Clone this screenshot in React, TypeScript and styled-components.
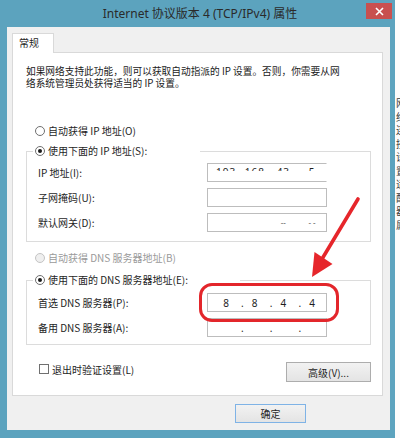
import React from 'react';
import styled, { createGlobalStyle } from 'styled-components';

const GlobalStyle = createGlobalStyle`
	html, body {
		margin: 0;
		padding: 0;
		background: #fbfbfb;
	}
	body {
		font-family: "Noto Sans CJK SC", "Noto Sans", sans-serif;
		font-size: 10px;
		color: #1e1e1e;
	}
	* {
		box-sizing: border-box;
	}
`;

const ipRows = [
	{ label: 'IP 地址(I):', octets: ['193', '168', '43', '5'], look: 'top' },
	{ label: '子网掩码(U):', octets: ['', '', '', ''], look: 'plain' },
	{ label: '默认网关(D):', octets: ['', '', '--', '- -'], look: 'faint' },
];

const dnsRows = [
	{ label: '首选 DNS 服务器(P):', octets: ['8', '8', '4', '4'], look: 'dots' },
	{ label: '备用 DNS 服务器(A):', octets: ['', '', '', ''], look: 'dots' },
];

const introLines = [
	'如果网络支持此功能，则可以获取自动指派的 IP 设置。否则，你需要从网',
	'络系统管理员处获得适当的 IP 设置。',
];

const backdropChars = ['网', '络', '连', '接', '设', '置', '适', '配', '器', '属'];

type Look = 'top' | 'plain' | 'faint' | 'dots';

const IpField = ({ octets, look }: { octets: string[]; look: Look }) => (
	<IpBox $open={look === 'top'}>
		{octets.map((o, i) => (
			<React.Fragment key={i}>
				<Octet $look={look}>{o}</Octet>
				{i < 3 && look === 'dots' && <Dot>.</Dot>}
				{i < 3 && look !== 'dots' && <Dot />}
			</React.Fragment>
		))}
	</IpBox>
);

const App = () => {
	return (
		<>
			<GlobalStyle />
			<Screen>
				<Window>
					<TitleBar>
						<span />
						<Title>Internet 协议版本 4 (TCP/IPv4) 属性</Title>
						<CloseButton>
							<svg width='9' height='9' viewBox='0 0 9 9'>
								<path
									d='M1 1 L8 8 M8 1 L1 8'
									stroke='#fff'
									strokeWidth='1.6'
								/>
							</svg>
						</CloseButton>
					</TitleBar>

					<Client>
						<TabStrip>
							<Tab>常规</Tab>
						</TabStrip>
						<Panel>
							<Description>
								{introLines.map(l => (
									<DescLine key={l}>{l}</DescLine>
								))}
							</Description>

							<LooseChoice $top={35}>
								<Radio />
								<span>自动获得 IP 地址(O)</span>
							</LooseChoice>

							<Group $top={6} $bottom={9}>
								<GroupLegend $width={167}>
									<Choice>
										<Radio $checked />
										<span>使用下面的 IP 地址(S):</span>
									</Choice>
								</GroupLegend>
								<FieldRows $top={5}>
									{ipRows.map(r => (
										<FieldRow key={r.label}>
											<FieldLabel>{r.label}</FieldLabel>
											<IpField
												octets={r.octets}
												look={r.look as Look}
											/>
										</FieldRow>
									))}
								</FieldRows>
							</Group>

							<LooseChoice $top={9} $disabled>
								<Radio $disabled />
								<span>自动获得 DNS 服务器地址(B)</span>
							</LooseChoice>

							<Group $top={8} $bottom={7}>
								<GroupLegend $width={207}>
									<Choice>
										<Radio $checked />
										<span>使用下面的 DNS 服务器地址(E):</span>
									</Choice>
								</GroupLegend>
								<FieldRows $top={6}>
									{dnsRows.map(r => (
										<FieldRow key={r.label}>
											<FieldLabel>{r.label}</FieldLabel>
											<IpField
												octets={r.octets}
												look={r.look as Look}
											/>
										</FieldRow>
									))}
								</FieldRows>
							</Group>

							<PanelFooter>
								<CheckLabel>
									<CheckBox />
									<span>退出时验证设置(L)</span>
								</CheckLabel>
								<PushButton $width={85}>高级(V)...</PushButton>
							</PanelFooter>
						</Panel>

						<DialogButtons>
							<PushButton $width={71} $default>
								确定
							</PushButton>
						</DialogButtons>
					</Client>
				</Window>

				<Backdrop>
					{backdropChars.map((c, i) => (
						<BackdropChar key={i}>{c}</BackdropChar>
					))}
				</Backdrop>

				<Highlight />
				<Annotation width='400' height='438' viewBox='0 0 400 438'>
					<line
						x1='358'
						y1='199'
						x2='322'
						y2='259'
						stroke='#e6262b'
						strokeWidth='3.6'
						strokeLinecap='round'
					/>
					<polygon points='312,277 314.5,252 332.5,264' fill='#e6262b' />
				</Annotation>
			</Screen>
		</>
	);
};

const Screen = styled.div`
	position: relative;
	width: 400px;
	height: 438px;
	overflow: hidden;
	display: flex;
`;

const Window = styled.div`
	width: 395px;
	height: 438px;
	flex-shrink: 0;
	background: #5ca3be;
	display: flex;
	flex-direction: column;
	padding: 0 5px 8px 7px;
`;

const TitleBar = styled.div`
	height: 27px;
	margin: 0 -5px 0 -7px;
	display: grid;
	grid-template-columns: 1fr auto 1fr;
	align-items: start;
`;

const Title = styled.div`
	font-family: "Noto Sans", "Noto Sans CJK SC", sans-serif;
	font-size: 12px;
	line-height: 27px;
	color: #2a2a2a;
	white-space: nowrap;
	padding-left: 5px;
`;

const CloseButton = styled.div`
	justify-self: end;
	margin: 3px 3px 0 0;
	width: 26px;
	height: 16px;
	background: #c8504f;
	display: flex;
	align-items: center;
	justify-content: center;
`;

const Client = styled.div`
	flex: 1;
	background: #f0f0f0;
	display: flex;
	flex-direction: column;
	padding: 6px 7px 7px 5px;
`;

const TabStrip = styled.div`
	display: flex;
	margin-bottom: -1px;
	position: relative;
	z-index: 1;
`;

const Tab = styled.div`
	width: 42px;
	height: 20px;
	background: #fff;
	border: 1px solid #d9d9d9;
	border-bottom: none;
	padding-left: 6px;
	line-height: 18px;
	font-size: 10px;
	color: #1e1e1e;
`;

const Panel = styled.div`
	background: #fff;
	border: 1px solid #d9d9d9;
	padding: 12px 0 13px 0;
	display: flex;
	flex-direction: column;
`;

const Description = styled.div`
	padding-left: 13px;
	display: flex;
	flex-direction: column;
	color: #1a1a1a;
`;

const DescLine = styled.div`
	height: 12px;
	font-size: 9.7px;
	line-height: 12px;
	white-space: nowrap;
`;

const Choice = styled.label<{ $disabled?: boolean }>`
	display: flex;
	align-items: center;
	gap: 3px;
	height: 14px;
	line-height: 14px;
	white-space: nowrap;
	color: ${p => (p.$disabled ? '#9a9a9a' : '#1e1e1e')};
`;

const LooseChoice = styled(Choice)<{ $top: number }>`
	margin-top: ${p => p.$top}px;
	padding-left: 22px;
`;

const Radio = styled.span<{ $checked?: boolean; $disabled?: boolean }>`
	width: 10px;
	height: 10px;
	border-radius: 50%;
	border: 1px solid ${p => (p.$disabled ? '#c4c4c4' : '#6f6f6f')};
	background: ${p => (p.$disabled ? '#efefef' : '#fff')};
	display: flex;
	align-items: center;
	justify-content: center;
	flex-shrink: 0;

	&::after {
		content: '';
		width: 4px;
		height: 4px;
		border-radius: 50%;
		background: ${p => (p.$checked ? '#1b1b1b' : 'transparent')};
	}
`;

const Group = styled.fieldset<{ $top: number; $bottom: number }>`
	margin: ${p => p.$top}px 11px 0 13px;
	border: 1px solid #dcdcdc;
	padding: 0 0 ${p => p.$bottom}px 6px;
	min-width: 0;
`;

const GroupLegend = styled.legend<{ $width: number }>`
	width: ${p => p.$width}px;
	padding: 0 0 0 2px;
	height: 14px;
`;

const FieldRows = styled.div<{ $top: number }>`
	display: flex;
	flex-direction: column;
	gap: 6px;
	padding: ${p => p.$top}px 0 0 5px;
`;

const FieldRow = styled.div`
	display: grid;
	grid-template-columns: 169px 120px;
	align-items: center;
`;

const FieldLabel = styled.span`
	white-space: nowrap;
	color: #1e1e1e;
`;

const IpBox = styled.div<{ $open?: boolean }>`
	height: 19px;
	border: 1px solid #bdbdbd;
	border-right-color: ${p => (p.$open ? '#fff' : '#bdbdbd')};
	background: #fff;
	display: flex;
	align-items: center;
	padding-left: 8px;
	overflow: hidden;
`;

const Octet = styled.span<{ $look: Look }>`
	width: 20px;
	flex-shrink: 0;
	text-align: center;
	font-family: "Noto Sans", sans-serif;
	font-size: ${p => (p.$look === 'faint' ? '8px' : '10px')};
	line-height: 12px;
	color: ${p => (p.$look === 'faint' ? '#6a6a6a' : '#1e1e1e')};
	letter-spacing: ${p => (p.$look === 'top' ? '1px' : '0')};
	height: ${p => (p.$look === 'top' ? '5px' : '12px')};
	align-self: ${p => (p.$look === 'top' ? 'flex-start' : 'center')};
	margin-top: ${p => (p.$look === 'top' ? '2px' : '0')};
	overflow: hidden;
`;

const Dot = styled.span`
	width: 8.7px;
	flex-shrink: 0;
	text-align: right;
	padding-right: 1px;
	font-family: "Noto Sans", sans-serif;
	font-size: 10px;
	line-height: 12px;
`;

const PanelFooter = styled.div`
	margin-top: 17px;
	padding: 0 11px 0 26px;
	display: flex;
	justify-content: space-between;
	align-items: flex-start;
`;

const CheckLabel = styled.label`
	display: flex;
	align-items: center;
	gap: 3px;
	height: 12px;
	margin-top: 1px;
	white-space: nowrap;
`;

const CheckBox = styled.span`
	width: 10px;
	height: 10px;
	border: 1px solid #707070;
	background: #fff;
	flex-shrink: 0;
`;

const PushButton = styled.div<{ $width: number; $default?: boolean }>`
	width: ${p => p.$width}px;
	height: ${p => (p.$default ? 19 : 20)}px;
	border: 1px solid ${p => (p.$default ? '#7fb3e6' : '#adadad')};
	background: linear-gradient(#f2f2f2, #e4e4e4);
	display: flex;
	align-items: center;
	justify-content: center;
	color: #1e1e1e;
	white-space: nowrap;
`;

const DialogButtons = styled.div`
	margin-top: 8px;
	display: flex;
	justify-content: flex-end;
	padding-right: 77px;
`;

const Backdrop = styled.div`
	flex: 1;
	background: #fcfcfc;
	padding: 96px 0 0 1px;
	display: flex;
	flex-direction: column;
	overflow: hidden;
`;

const BackdropChar = styled.span`
	font-size: 10px;
	line-height: 13.5px;
	color: #3a3a3a;
	white-space: nowrap;
`;

const Highlight = styled.div`
	position: absolute;
	left: 199px;
	top: 283px;
	width: 140px;
	height: 39px;
	border: 3px solid #e3262b;
	border-radius: 13px;
	pointer-events: none;
`;

const Annotation = styled.svg`
	position: absolute;
	left: 0;
	top: 0;
	pointer-events: none;
`;

export default App;
